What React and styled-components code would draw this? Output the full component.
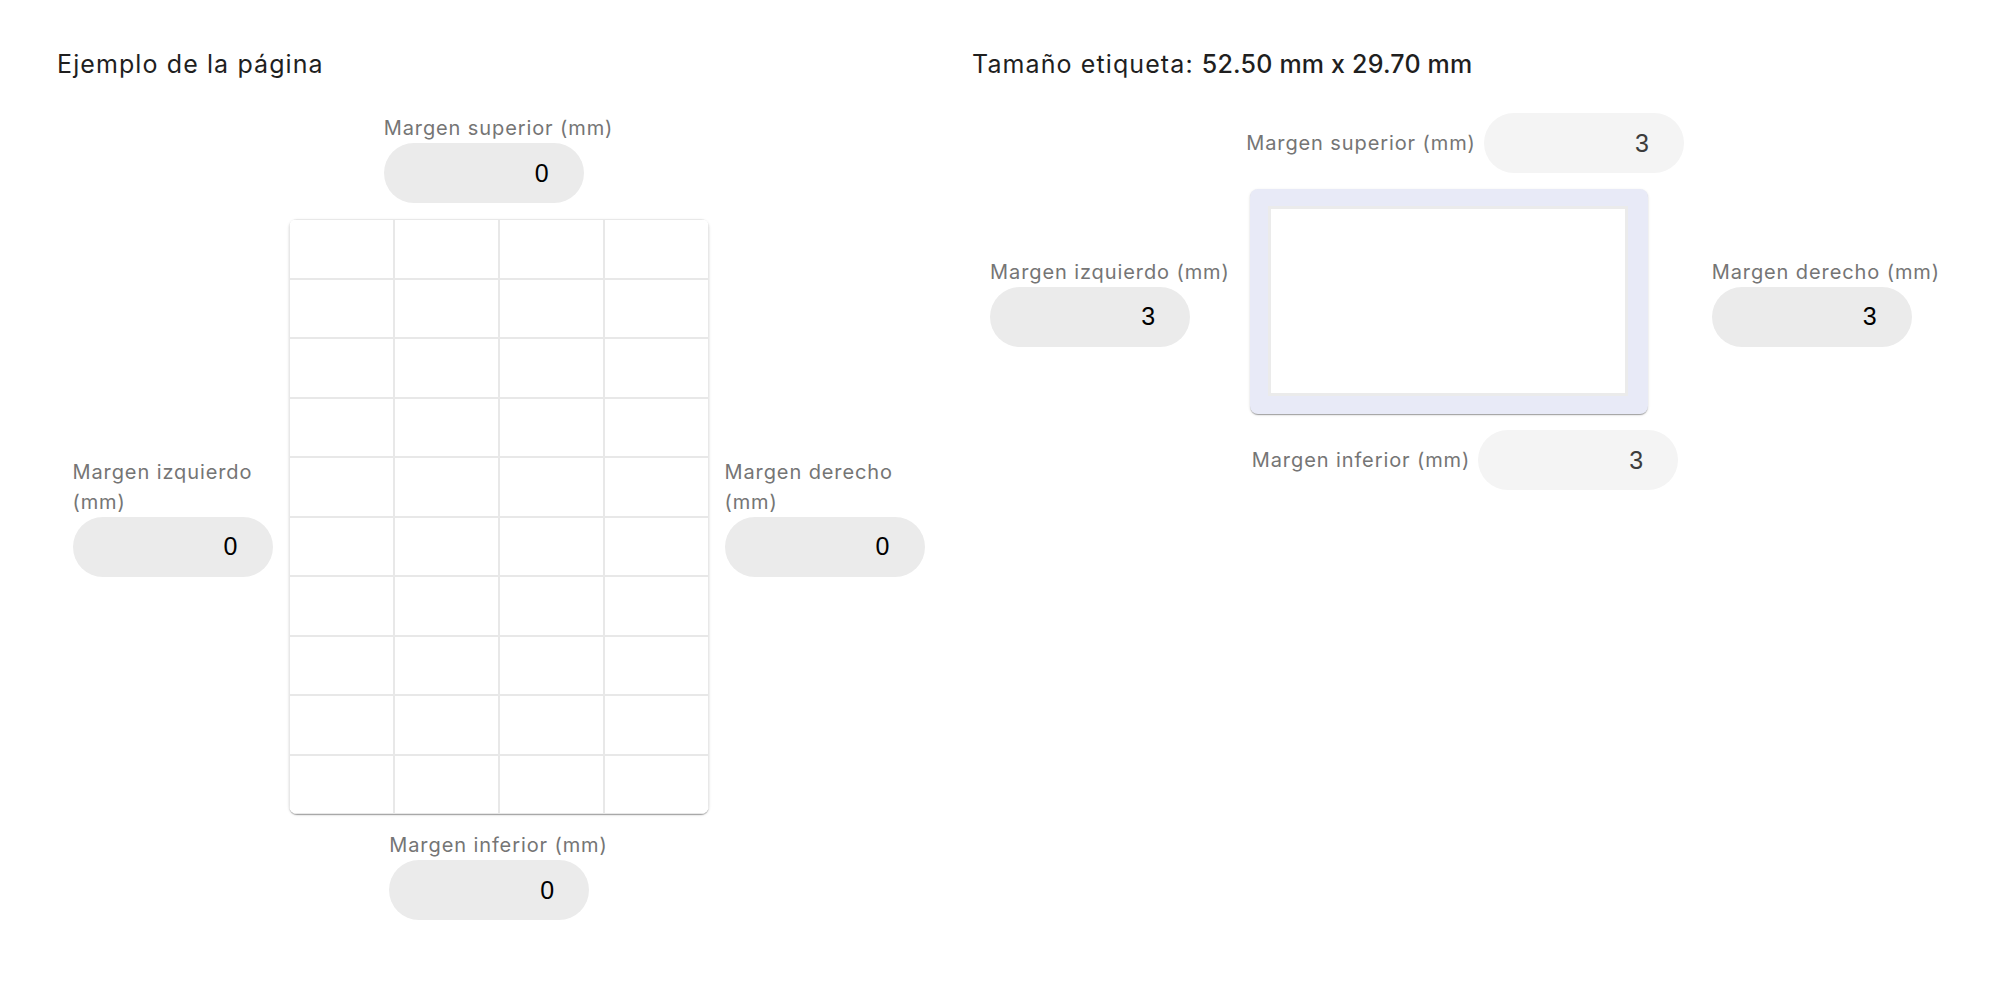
import React from 'react';
import styled, { createGlobalStyle } from 'styled-components';

const GlobalStyle = createGlobalStyle`
  * { box-sizing: border-box; }
  body {
    margin: 0;
    background: #ffffff;
    font-family: Inter, "Noto Sans", sans-serif;
  }
`;

export default function App() {
  const cells = Array.from({ length: 40 });
  return (
    <>
      <GlobalStyle />
      <Page>
        <Panel $width="883px">
          <Title>Ejemplo de la página</Title>
          <Diagram>
            <NumberField label="Margen superior (mm)" value="0" />
            <MiddleRow>
              <NumberField label="Margen izquierdo (mm)" value="0" narrow />
              <SheetGrid>
                {cells.map((_, i) => (
                  <Cell key={i} />
                ))}
              </SheetGrid>
              <NumberField label="Margen derecho (mm)" value="0" narrow />
            </MiddleRow>
            <NumberField label="Margen inferior (mm)" value="0" />
          </Diagram>
        </Panel>

        <Panel>
          <Title>
            Tamaño etiqueta: <strong>52.50 mm x 29.70 mm</strong>
          </Title>
          <Diagram>
            <NumberField label="Margen superior (mm)" value="3" inline light />
            <MiddleRow>
              <NumberField label="Margen izquierdo (mm)" value="3" />
              <LabelPreview>
                <LabelInner />
              </LabelPreview>
              <NumberField label="Margen derecho (mm)" value="3" />
            </MiddleRow>
            <NumberField label="Margen inferior (mm)" value="3" inline light />
          </Diagram>
        </Panel>
      </Page>
    </>
  );
}

function NumberField({ label, value, narrow, inline, light }) {
  return (
    <Field $narrow={narrow} $inline={inline}>
      <FieldLabel>{label}</FieldLabel>
      <Input defaultValue={value} $light={light} />
    </Field>
  );
}

const Page = styled.div`
  display: flex;
  gap: 32px;
  padding: 46px 34px 0 57px;
`;

const Panel = styled.section`
  width: ${({ $width }) => $width || 'auto'};
  flex: ${({ $width }) => ($width ? '0 0 auto' : '1')};
  display: flex;
  flex-direction: column;
`;

const Title = styled.h2`
  margin: 0 0 31px;
  font-size: 25px;
  line-height: 36px;
  font-weight: 400;
  letter-spacing: 1.1px;
  color: #1f1f1f;
  strong {
    font-weight: 500;
    letter-spacing: 0.2px;
  }
`;

const Diagram = styled.div`
  display: flex;
  flex-direction: column;
  align-items: center;
  gap: 16px;
`;

const MiddleRow = styled.div`
  display: flex;
  align-items: center;
  gap: 16px;
`;

const Field = styled.label`
  display: flex;
  flex-direction: ${({ $inline }) => ($inline ? 'row' : 'column')};
  align-items: ${({ $inline }) => ($inline ? 'center' : 'flex-start')};
  gap: ${({ $inline }) => ($inline ? '8px' : '0')};
  width: ${({ $narrow }) => ($narrow ? '200px' : 'auto')};
`;

const FieldLabel = styled.span`
  font-size: 20px;
  line-height: 1.5;
  letter-spacing: 0.9px;
  color: #757575;
  white-space: ${({ children }) => (children ? 'normal' : 'nowrap')};
`;

const Input = styled.input`
  width: 200px;
  height: 60px;
  border: none;
  outline: none;
  border-radius: 30px;
  padding: 0 35px 0 20px;
  background: ${({ $light }) => ($light ? '#f4f4f4' : '#ebebeb')};
  color: ${({ $light }) => ($light ? '#3c3c3c' : '#000000')};
  font-family: "Liberation Sans", Arial, sans-serif;
  font-size: 25px;
  text-align: right;
`;

const SheetGrid = styled.div`
  display: grid;
  grid-template-columns: repeat(4, 105px);
  grid-auto-rows: 59.5px;
  border-radius: 8px;
  overflow: hidden;
  background: #ffffff;
  box-shadow: 0 2px 1px -1px rgba(0, 0, 0, 0.2), 0 1px 1px 0 rgba(0, 0, 0, 0.14),
    0 1px 3px 0 rgba(0, 0, 0, 0.12);
`;

const Cell = styled.div`
  border: 1px solid #e8e8e8;
`;

const LabelPreview = styled.div`
  width: 398px;
  height: 225px;
  margin: 0 48px 0 4px;
  padding: 17px 20px 18px 18px;
  border-radius: 8px;
  background: #e8eaf7;
  box-shadow: 0 2px 1px -1px rgba(0, 0, 0, 0.2), 0 1px 1px 0 rgba(0, 0, 0, 0.14),
    0 1px 3px 0 rgba(0, 0, 0, 0.12);
`;

const LabelInner = styled.div`
  width: 100%;
  height: 100%;
  background: #ffffff;
  border: 3px solid #ebebeb;
`;
